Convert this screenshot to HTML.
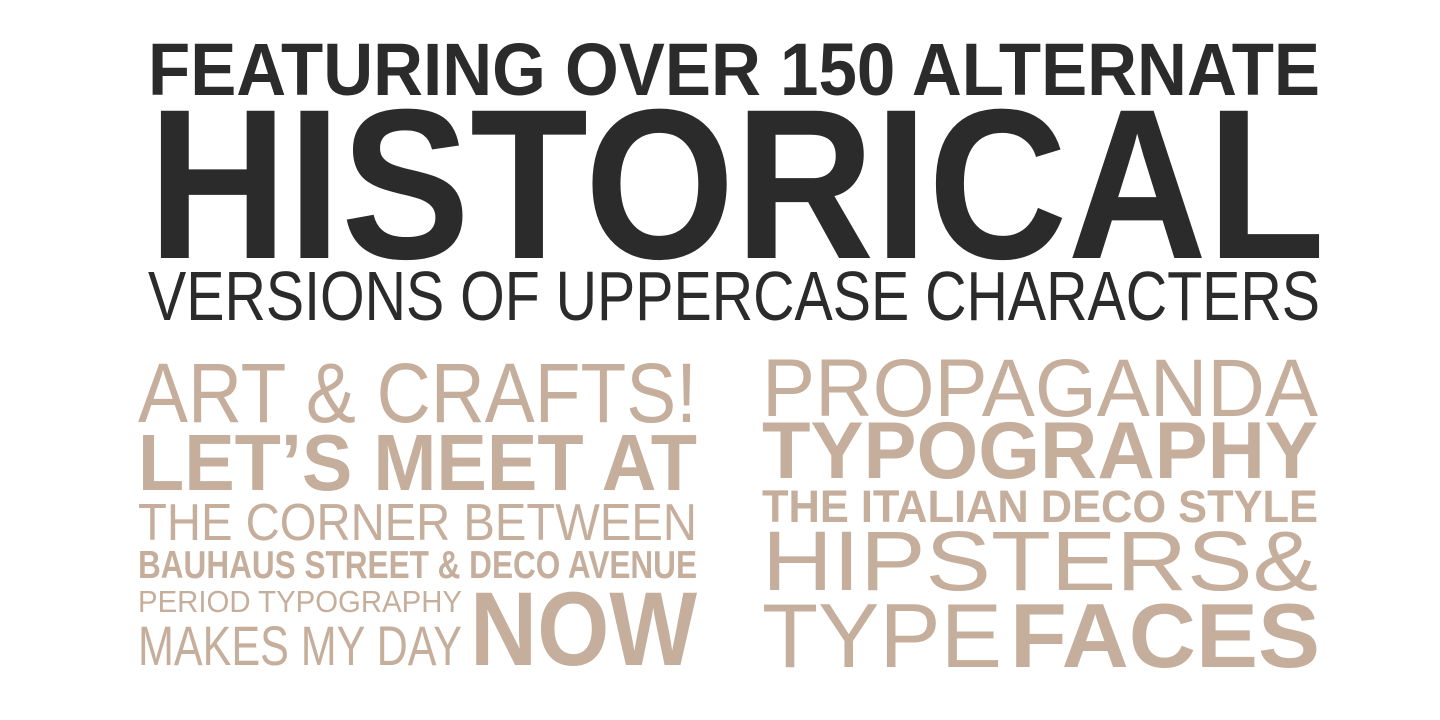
<!DOCTYPE html>
<html><head><meta charset="utf-8"><style>
html,body{margin:0;padding:0;background:#fff;width:1440px;height:720px;overflow:hidden}
svg{display:block}
text{font-family:"Liberation Sans",sans-serif}
.d{fill:#2b2b2b}.t{fill:#c6ae9c}
</style></head><body>
<svg width="1440" height="720" viewBox="0 0 1440 720">
<text class="d" x="148" y="95" font-size="74" font-weight="bold" textLength="1172" lengthAdjust="spacingAndGlyphs">FEATURING OVER 150 ALTERNATE</text>
<text class="d" x="148" y="258" font-size="214" font-weight="bold" textLength="1177" lengthAdjust="spacingAndGlyphs">HISTORICAL</text>
<text class="d" x="148" y="320" font-size="70" textLength="1172" lengthAdjust="spacingAndGlyphs">VERSIONS OF UPPERCASE CHARACTERS</text>

<text class="t" x="138" y="422" font-size="84" textLength="559" lengthAdjust="spacingAndGlyphs">ART &amp; CRAFTS!</text>
<text class="t" x="138" y="490" font-size="80" font-weight="bold" textLength="559" lengthAdjust="spacingAndGlyphs">LET’S MEET AT</text>
<text class="t" x="138" y="540" font-size="52" textLength="559" lengthAdjust="spacingAndGlyphs">THE CORNER BETWEEN</text>
<text class="t" x="138" y="578" font-size="39" font-weight="bold" textLength="559" lengthAdjust="spacingAndGlyphs">BAUHAUS STREET &amp; DECO AVENUE</text>
<text class="t" x="138" y="612" font-size="31" textLength="324" lengthAdjust="spacingAndGlyphs">PERIOD TYPOGRAPHY</text>
<text class="t" x="138" y="665" font-size="56" textLength="324" lengthAdjust="spacingAndGlyphs">MAKES MY DAY</text>
<text class="t" x="470" y="665" font-size="105" font-weight="bold" textLength="227" lengthAdjust="spacingAndGlyphs">NOW</text>

<text class="t" x="762" y="416" font-size="82" textLength="556" lengthAdjust="spacingAndGlyphs">PROPAGANDA</text>
<text class="t" x="762" y="478" font-size="81" font-weight="bold" textLength="556" lengthAdjust="spacingAndGlyphs">TYPOGRAPHY</text>
<text class="t" x="762" y="522" font-size="45" font-weight="bold" textLength="556" lengthAdjust="spacingAndGlyphs">THE ITALIAN DECO STYLE</text>
<text class="t" x="762" y="590" font-size="84" textLength="556" lengthAdjust="spacingAndGlyphs">HIPSTERS&amp;</text>
<text class="t" x="762" y="667" font-size="91" textLength="240" lengthAdjust="spacingAndGlyphs">TYPE</text>
<text class="t" x="1010" y="667" font-size="91" font-weight="bold" textLength="310" lengthAdjust="spacingAndGlyphs">FACES</text>
</svg>
</body></html>
